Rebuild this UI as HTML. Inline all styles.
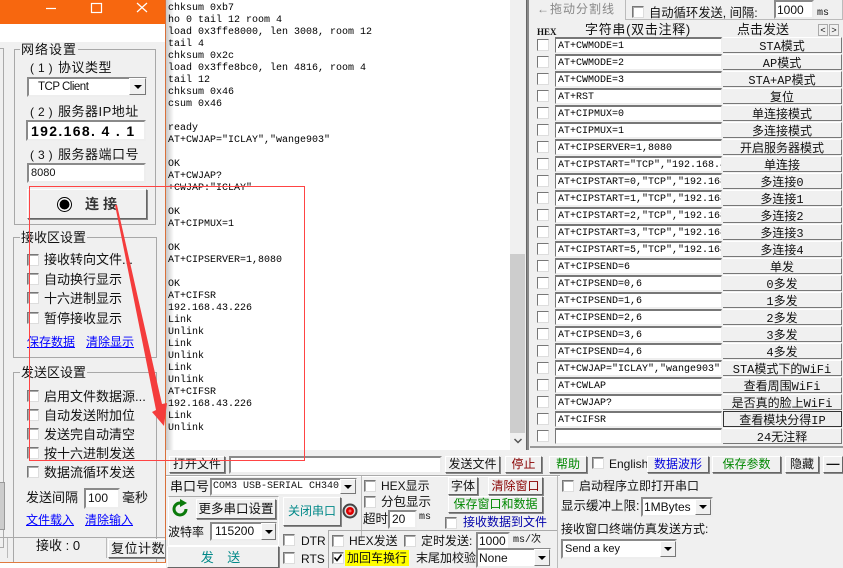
<!DOCTYPE html>
<html><head><meta charset="utf-8">
<style>
html,body{margin:0;padding:0;width:843px;height:568px;overflow:hidden;background:#f0f0f0}
*{box-sizing:border-box}
body{position:relative;font-family:"Liberation Sans","WenQuanYi Zen Hei","Noto Sans CJK SC",sans-serif;font-size:13px;color:#111}
.a,.t,.cb,.btn,.in,.gb,.row,.sel{position:absolute}
.t{white-space:nowrap;line-height:16px;height:16px}
.cb{width:12px;height:12px;background:#fff;border:1px solid;border-color:#777 #ddd #ddd #777;box-shadow:inset 1px 1px 0 #aaa}
.btn{background:#f0f0f0;border:1px solid;border-color:#fff #666 #666 #fff;box-shadow:1px 1px 0 #888;text-align:center;white-space:nowrap;overflow:hidden}
.in{background:#fff;border:2px solid;border-color:#8a8a8a #eee #eee #8a8a8a;white-space:nowrap;overflow:hidden;padding-left:2px}
.gb{border:1px solid #a8a8a8}
.lk{color:#00f;text-decoration:underline}
.m{font-family:"Liberation Mono","WenQuanYi Zen Hei","Noto Sans CJK SC",monospace;font-size:10px}
.log{position:absolute;left:168px;top:3px;margin:0;font-family:"Liberation Mono",monospace;font-size:10px;line-height:12px;color:#000;white-space:pre}
.row{left:537px;width:305px;height:17px}
.row i{position:absolute;left:0;top:2px;width:12px;height:12px;background:#fff;border:1px solid;border-color:#777 #ddd #ddd #777}
.row b{font-weight:normal;position:absolute;left:18px;top:0;width:167px;height:16px;background:#fff;border:1px solid;border-color:#777 #eee #eee #777;border-top:2px solid #777;font:10px/15px "Liberation Mono",monospace;padding-left:2px;overflow:hidden;white-space:nowrap;color:#000}
.row u{position:absolute;left:186px;top:0;width:119px;height:16px;background:#f0f0f0;border-bottom:1px solid #777;border-right:1px solid #777;border-top:1px solid #fff;text-align:center;font:12px/18px "Liberation Mono","WenQuanYi Zen Hei","Noto Sans CJK SC",monospace;white-space:nowrap;overflow:hidden;color:#111;text-decoration:none}
.dn{position:absolute;background:#f0f0f0;border:1px solid;border-color:#fff #777 #777 #fff}
.dn:after{content:"";position:absolute;left:50%;top:50%;margin:-2px 0 0 -4px;border:4px solid transparent;border-top:4px solid #000;border-bottom:0}
</style></head><body>

<!-- left window -->
<div class="a" style="left:0;top:0;width:166px;height:24px;background:#f7670f"></div>
<div class="a" style="left:0;top:24px;width:165px;height:18px;background:#fff"></div>
<div class="a" style="left:165px;top:0;width:1px;height:568px;background:#d9703a"></div>
<svg class="a" style="left:40px;top:0" width="120" height="20" fill="none" stroke="#fff" stroke-width="1.2"><path d="M6 8.5H16"/><rect x="51.5" y="3.5" width="10" height="9"/><path d="M97 3L107 12M107 3L97 12"/></svg>

<div class="a" style="left:0;top:48px;width:4px;height:500px;border-right:1px solid #aaa;border-top:1px solid #aaa;border-bottom:1px solid #aaa"></div>
<div class="a" style="left:0;top:482px;width:5px;height:48px;background:#ccc;border:1px solid #999;border-left:0"></div>

<div class="gb" style="left:14px;top:49px;width:142px;height:176px"></div>
<div class="t" style="left:20px;top:42px;background:#f0f0f0;padding:0 1px;font-size:13px;letter-spacing:1px">网络设置</div>
<div class="t" style="left:30px;top:60px;letter-spacing:4px;font-size:12px">(1)</div>
<div class="t" style="left:58px;top:60px;letter-spacing:.5px">协议类型</div>
<div class="in" style="left:27px;top:77px;width:120px;height:20px;font-size:11.5px;letter-spacing:-.5px;line-height:16px;padding-left:9px">TCP Client</div>
<div class="dn" style="left:129px;top:78px;width:17px;height:17px"></div>
<div class="t" style="left:30px;top:104px;letter-spacing:4px;font-size:12px">(2)</div>
<div class="t" style="left:58px;top:104px;letter-spacing:.5px">服务器IP地址</div>
<div class="in" style="left:26px;top:120px;width:120px;height:21px;font:bold 14px/18px 'Liberation Sans',sans-serif;padding-left:3px;letter-spacing:1.35px;color:#000">192.168. 4 . 1</div>
<div class="t" style="left:30px;top:147px;letter-spacing:4px;font-size:12px">(3)</div>
<div class="t" style="left:58px;top:147px;letter-spacing:.5px">服务器端口号</div>
<div class="in" style="left:27px;top:163px;width:119px;height:20px;font-size:11px;line-height:16px;padding-left:2px">8080</div>
<div class="btn" style="left:27px;top:189px;width:120px;height:30px"></div>
<svg class="a" style="left:56px;top:196px" width="18" height="18"><circle cx="8.5" cy="8.5" r="7" fill="#fff" stroke="#000"/><circle cx="8.5" cy="8.5" r="5" fill="#000"/></svg>
<div class="t" style="left:85px;top:196px;font-size:14px;font-weight:bold;color:#333;letter-spacing:4px">连接</div>

<div class="gb" style="left:13px;top:237px;width:144px;height:121px"></div>
<div class="t" style="left:20px;top:230px;background:#f0f0f0;padding:0 1px">接收区设置</div>
<div class="cb" style="left:27px;top:254px"></div><div class="t" style="left:44px;top:252px">接收转向文件...</div>
<div class="cb" style="left:27px;top:273px"></div><div class="t" style="left:44px;top:272px">自动换行显示</div>
<div class="cb" style="left:27px;top:292px"></div><div class="t" style="left:44px;top:291px">十六进制显示</div>
<div class="cb" style="left:27px;top:312px"></div><div class="t" style="left:44px;top:311px">暂停接收显示</div>
<div class="t lk" style="left:27px;top:334px;font-size:12px">保存数据</div>
<div class="t lk" style="left:86px;top:334px;font-size:12px">清除显示</div>

<div class="gb" style="left:13px;top:372px;width:144px;height:200px;border-bottom:0"></div>
<div class="t" style="left:20px;top:365px;background:#f0f0f0;padding:0 1px">发送区设置</div>
<div class="cb" style="left:27px;top:390px"></div><div class="t" style="left:44px;top:389px">启用文件数据源...</div>
<div class="cb" style="left:27px;top:409px"></div><div class="t" style="left:44px;top:408px">自动发送附加位</div>
<div class="cb" style="left:27px;top:428px"></div><div class="t" style="left:44px;top:427px">发送完自动清空</div>
<div class="cb" style="left:27px;top:447px"></div><div class="t" style="left:44px;top:446px">按十六进制发送</div>
<div class="cb" style="left:27px;top:466px"></div><div class="t" style="left:44px;top:465px">数据流循环发送</div>
<div class="t" style="left:26px;top:490px">发送间隔</div>
<div class="in" style="left:84px;top:488px;width:36px;height:21px;font-size:12px;line-height:17px">100</div>
<div class="t" style="left:122px;top:490px">毫秒</div>
<div class="t lk" style="left:26px;top:512px;font-size:12px">文件载入</div>
<div class="t lk" style="left:85px;top:512px;font-size:12px">清除输入</div>

<div class="a" style="left:0;top:537px;width:165px;height:1px;background:#aaa"></div>
<div class="a" style="left:7px;top:538px;width:100px;height:20px;border:1px solid #bbb;border-top:0;border-bottom:0"></div>
<div class="t" style="left:36px;top:538px">接收 : 0</div>
<div class="btn" style="left:108px;top:539px;width:57px;height:19px;line-height:17px;text-align:left;padding-left:2px;border-right:0;letter-spacing:.5px">复位计数</div>
<div class="a" style="left:0;top:562px;width:166px;height:1px;background:#e07a3f"></div>
<div class="a" style="left:0;top:563px;width:166px;height:5px;background:#fff"></div>

<!-- log -->
<div class="a" style="left:166px;top:0;width:344px;height:450px;background:#fff"></div>
<div class="a" style="left:166px;top:0;width:8px;height:450px;background:linear-gradient(90deg,#c8c8c8,#fff)"></div>
<pre class="log">chksum 0xb7
ho 0 tail 12 room 4
load 0x3ffe8000, len 3008, room 12
tail 4
chksum 0x2c
load 0x3ffe8bc0, len 4816, room 4
tail 12
chksum 0x46
csum 0x46

ready
AT+CWJAP="ICLAY","wange903"

OK
AT+CWJAP?
+CWJAP:"ICLAY"

OK
AT+CIPMUX=1

OK
AT+CIPSERVER=1,8080

OK
AT+CIFSR
192.168.43.226
Link
Unlink
Link
Unlink
Link
Unlink
AT+CIFSR
192.168.43.226
Link
Unlink</pre>
<!-- scrollbar -->
<div class="a" style="left:510px;top:0;width:15px;height:450px;background:#f0f0f0"></div>
<div class="a" style="left:510px;top:254px;width:15px;height:179px;background:#cdcdcd"></div>
<svg class="a" style="left:513px;top:436px" width="10" height="10" fill="none" stroke="#555" stroke-width="1.5"><path d="M1.5 3L5 6.5L8.5 3"/></svg>
<div class="a" style="left:526px;top:0;width:3px;height:450px;background:#888;border-left:1px solid #666"></div>

<!-- right panel -->
<div class="a" style="left:529px;top:0;width:314px;height:450px;background:#f0f0f0"></div>
<div class="a" style="left:530px;top:446px;width:313px;height:2px;background:#999"></div>
<div class="t" style="left:537px;top:1px;color:#888;font-size:12px;letter-spacing:1px">←拖动分割线</div>
<div class="a" style="left:625px;top:-2px;width:218px;height:22px;border:1px solid #bbb"></div>
<div class="cb" style="left:632px;top:6px"></div>
<div class="t" style="left:649px;top:5px;font-size:12.3px">自动循环发送, 间隔:</div>
<div class="in" style="left:774px;top:0;width:40px;height:19px;font-size:12px;line-height:16px;padding-left:1px">1000</div>
<div class="t m" style="left:817px;top:6px">ms</div>
<div class="t m" style="left:537px;top:24px;font-weight:bold;font-family:'Liberation Serif',serif;font-size:9px">HEX</div>
<div class="t" style="left:585px;top:22px;letter-spacing:.7px">字符串(双击注释)</div>
<div class="t" style="left:737px;top:22px">点击发送</div>
<div class="a" style="left:818px;top:24px;width:10px;height:12px;border:1px solid #aaa;font-size:9px;line-height:10px;text-align:center">&lt;</div>
<div class="a" style="left:829px;top:24px;width:10px;height:12px;border:1px solid #aaa;font-size:9px;line-height:10px;text-align:center">&gt;</div>

<div class="row" style="top:37px"><i></i><b>AT+CWMODE=1</b><u>STA模式</u></div>
<div class="row" style="top:54px"><i></i><b>AT+CWMODE=2</b><u>AP模式</u></div>
<div class="row" style="top:71px"><i></i><b>AT+CWMODE=3</b><u>STA+AP模式</u></div>
<div class="row" style="top:88px"><i></i><b>AT+RST</b><u>复位</u></div>
<div class="row" style="top:105px"><i></i><b>AT+CIPMUX=0</b><u>单连接模式</u></div>
<div class="row" style="top:122px"><i></i><b>AT+CIPMUX=1</b><u>多连接模式</u></div>
<div class="row" style="top:139px"><i></i><b>AT+CIPSERVER=1,8080</b><u>开启服务器模式</u></div>
<div class="row" style="top:156px"><i></i><b>AT+CIPSTART="TCP","192.168.4.1",8080</b><u>单连接</u></div>
<div class="row" style="top:173px"><i></i><b>AT+CIPSTART=0,"TCP","192.168.4.1",8080</b><u>多连接0</u></div>
<div class="row" style="top:190px"><i></i><b>AT+CIPSTART=1,"TCP","192.168.4.1",8080</b><u>多连接1</u></div>
<div class="row" style="top:207px"><i></i><b>AT+CIPSTART=2,"TCP","192.168.4.1",8080</b><u>多连接2</u></div>
<div class="row" style="top:224px"><i></i><b>AT+CIPSTART=3,"TCP","192.168.4.1",8080</b><u>多连接3</u></div>
<div class="row" style="top:241px"><i></i><b>AT+CIPSTART=5,"TCP","192.168.4.1",8080</b><u>多连接4</u></div>
<div class="row" style="top:258px"><i></i><b>AT+CIPSEND=6</b><u>单发</u></div>
<div class="row" style="top:275px"><i></i><b>AT+CIPSEND=0,6</b><u>0多发</u></div>
<div class="row" style="top:292px"><i></i><b>AT+CIPSEND=1,6</b><u>1多发</u></div>
<div class="row" style="top:309px"><i></i><b>AT+CIPSEND=2,6</b><u>2多发</u></div>
<div class="row" style="top:326px"><i></i><b>AT+CIPSEND=3,6</b><u>3多发</u></div>
<div class="row" style="top:343px"><i></i><b>AT+CIPSEND=4,6</b><u>4多发</u></div>
<div class="row" style="top:360px"><i></i><b>AT+CWJAP="ICLAY","wange903"</b><u>STA模式下的WiFi</u></div>
<div class="row" style="top:377px"><i></i><b>AT+CWLAP</b><u>查看周围WiFi</u></div>
<div class="row" style="top:394px"><i></i><b>AT+CWJAP?</b><u>是否真的脸上WiFi</u></div>
<div class="row" style="top:411px"><i></i><b>AT+CIFSR</b><u style="border:1px solid #333;background:#eee">查看模块分得IP</u></div>
<div class="row" style="top:428px"><i></i><b></b><u>24无注释</u></div>

<!-- bottom -->
<div class="a" style="left:166px;top:450px;width:677px;height:118px;background:#f0f0f0"></div>
<div class="btn" style="left:169px;top:456px;width:56px;height:17px;line-height:15px;font-size:12px">打开文件</div>
<div class="in" style="left:229px;top:456px;width:213px;height:18px"></div>
<div class="btn" style="left:445px;top:456px;width:55px;height:17px;line-height:15px;font-size:12px">发送文件</div>
<div class="btn" style="left:505px;top:456px;width:37px;height:17px;line-height:15px;font-size:12px;color:#800">停止</div>
<div class="btn" style="left:549px;top:456px;width:38px;height:17px;line-height:15px;font-size:12px;color:#080">帮助</div>
<div class="cb" style="left:592px;top:457px"></div>
<div class="t" style="left:609px;top:456px;font-size:12px">English</div>
<div class="btn" style="left:647px;top:456px;width:62px;height:17px;line-height:15px;font-size:12px;color:#00d">数据波形</div>
<div class="btn" style="left:712px;top:456px;width:69px;height:17px;line-height:15px;font-size:12px;color:#080">保存参数</div>
<div class="btn" style="left:785px;top:456px;width:34px;height:17px;line-height:15px;font-size:12px">隐藏</div>
<div class="btn" style="left:823px;top:456px;width:20px;height:17px;font-weight:bold;line-height:14px">—</div>
<div class="a" style="left:166px;top:475px;width:394px;height:1px;background:#aaa"></div>
<div class="a" style="left:166px;top:476px;width:394px;height:1px;background:#fff"></div>

<div class="t" style="left:170px;top:479px;font-size:13px">串口号</div>
<div class="in" style="left:210px;top:478px;width:147px;height:18px;font:10px/14px 'Liberation Mono',monospace;padding-left:1px">COM3 USB-SERIAL CH340</div>
<div class="dn" style="left:340px;top:479px;width:16px;height:15px"></div>
<div class="a" style="left:168px;top:496px;width:111px;height:50px;border:1px solid #fff;border-top:1px solid #aaa"></div>
<svg class="a" style="left:172px;top:498px" width="20" height="20" fill="none"><path d="M8 5A6 6 0 1 0 14 11" stroke="#0a7a0a" stroke-width="3"/><polygon points="8,1 15,5 8,9" fill="#0a7a0a"/></svg>
<div class="btn" style="left:196px;top:499px;width:80px;height:20px;line-height:18px;font-size:12.5px">更多串口设置</div>
<div class="t" style="left:168px;top:524px;font-size:12px">波特率</div>
<div class="in" style="left:210px;top:522px;width:67px;height:19px;font-size:12px;line-height:15px;padding-left:3px">115200</div>
<div class="dn" style="left:261px;top:523px;width:15px;height:17px"></div>
<div class="btn" style="left:167px;top:546px;width:112px;height:22px;color:#088;line-height:22px;letter-spacing:5px">发 送</div>
<div class="btn" style="left:283px;top:497px;width:58px;height:29px;color:#088;line-height:27px;font-size:12px">关闭串口</div>
<svg class="a" style="left:342px;top:503px" width="16" height="16"><circle cx="8" cy="8" r="7.5" fill="#444"/><circle cx="8" cy="8" r="5.5" fill="#ddd"/><circle cx="8" cy="8" r="4" fill="#d00"/><circle cx="8" cy="8" r="1.5" fill="#f66"/></svg>

<div class="a" style="left:361px;top:476px;width:1px;height:64px;background:#bbb"></div>
<div class="cb" style="left:364px;top:480px"></div><div class="t" style="left:381px;top:478px;font-size:12px">HEX显示</div>
<div class="cb" style="left:364px;top:496px"></div><div class="t" style="left:381px;top:494px;font-size:12.5px">分包显示</div>
<div class="t" style="left:363px;top:511px;font-size:12.5px">超时</div>
<div class="in" style="left:388px;top:510px;width:29px;height:19px;font-size:12px;line-height:15px">20</div>
<div class="t m" style="left:419px;top:510px">ms</div>

<div class="btn" style="left:448px;top:477px;width:30px;height:18px;font-size:12px;line-height:16px">字体</div>
<div class="btn" style="left:488px;top:477px;width:55px;height:18px;font-size:12px;line-height:16px;color:#800">清除窗口</div>
<div class="btn" style="left:448px;top:496px;width:95px;height:17px;font-size:12px;line-height:15px;color:#080">保存窗口和数据</div>
<div class="cb" style="left:445px;top:517px"></div>
<div class="t" style="left:463px;top:514px;font-size:12px;color:#00a">接收数据到文件</div>

<div class="a" style="left:328px;top:530px;width:230px;height:38px;border-top:1px solid #aaa;border-left:1px solid #aaa"></div>
<div class="a" style="left:557px;top:476px;width:1px;height:92px;background:#bbb"></div>
<div class="cb" style="left:283px;top:534px"></div><div class="t" style="left:301px;top:533px;font-size:12px">DTR</div>
<div class="cb" style="left:283px;top:552px"></div><div class="t" style="left:301px;top:551px;font-size:12px">RTS</div>
<div class="cb" style="left:332px;top:535px"></div><div class="t" style="left:349px;top:533px;font-size:12px">HEX发送</div>
<div class="cb" style="left:404px;top:535px"></div><div class="t" style="left:421px;top:533px;font-size:12px">定时发送:</div>
<div class="in" style="left:476px;top:532px;width:34px;height:19px;font-size:12px;line-height:15px;padding-left:1px">1000</div>
<div class="t m" style="left:513px;top:533px">ms/次</div>
<div class="cb" style="left:332px;top:552px"></div>
<svg class="a" style="left:333px;top:553px" width="10" height="10" fill="none" stroke="#000" stroke-width="1.6"><path d="M1.5 4.5L4 7.5L8.5 1.5"/></svg>
<div class="t" style="left:345px;top:550px;width:64px;background:#ff0;font-size:12px;text-align:center">加回车换行</div>
<div class="t" style="left:416px;top:550px;font-size:12px">末尾加校验</div>
<div class="in" style="left:476px;top:548px;width:75px;height:20px;font-size:12px;line-height:16px;padding-left:1px">None</div>
<div class="dn" style="left:534px;top:549px;width:16px;height:17px"></div>

<div class="cb" style="left:562px;top:480px"></div>
<div class="t" style="left:579px;top:478px;font-size:12px">启动程序立即打开串口</div>
<div class="t" style="left:561px;top:498px;font-size:12.5px">显示缓冲上限:</div>
<div class="in" style="left:641px;top:497px;width:72px;height:20px;font-size:12px;line-height:16px;padding-left:1px">1MBytes</div>
<div class="dn" style="left:695px;top:499px;width:16px;height:16px"></div>
<div class="t" style="left:561px;top:521px;font-size:12px">接收窗口终端仿真发送方式:</div>
<div class="in" style="left:561px;top:539px;width:116px;height:20px;font-size:11px;line-height:16px;padding-left:2px">Send a key</div>
<div class="dn" style="left:660px;top:541px;width:16px;height:16px"></div>

<!-- annotations -->
<svg class="a" style="left:0;top:0" width="843" height="568">
<rect x="29.5" y="186.5" width="275" height="274" fill="none" stroke="#f44" stroke-width="1"/>
<polygon points="115,205 117,205 162,404 167,403 164,426 152,412 156,410" fill="#f43c3c"/>
</svg>
</body></html>
